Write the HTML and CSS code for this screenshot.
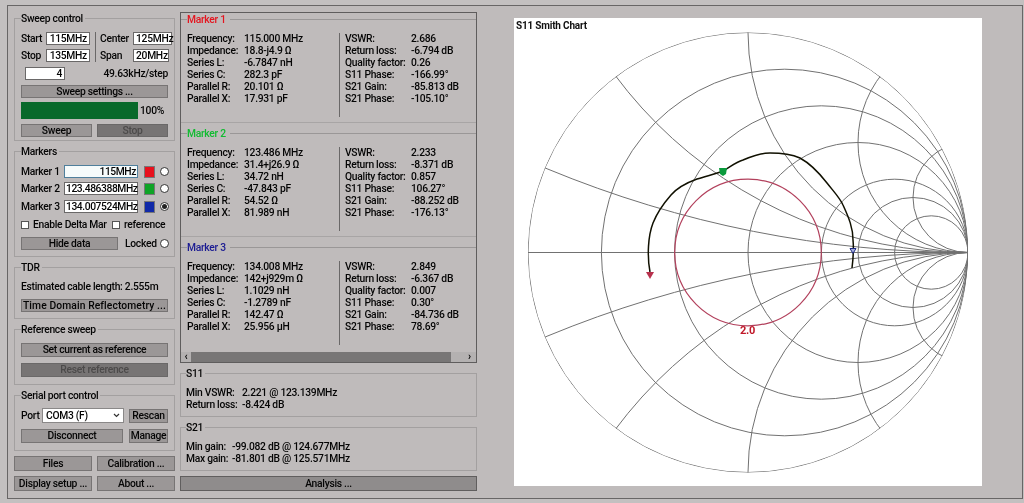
FILE: index.html
```html
<!DOCTYPE html>
<html lang="en">
<head>
<meta charset="utf-8">
<title>NanoVNA Saver</title>
<link rel="stylesheet" href="styles.css">
</head>
<body>
<div class="frame">
  <div class="left">
    <section class="group h123">
      <div class="gtitle">Sweep control</div>
      <div class="stack">
        <div class="row"><span class="l25">Start</span><span class="field w44">115MHz</span><i class="vsep"></i><span class="l33">Center</span><span class="field w39">125MHz</span></div>
        <div class="row"><span class="l25">Stop</span><span class="field w44">135MHz</span><i class="vsep short"></i><span class="l33">Span</span><span class="field w36">20MHz</span></div>
        <div class="row mt1"><span class="field w40 ml4">4</span><span class="push">49.63kHz/step</span></div>
        <div class="btn mt1">Sweep settings ...</div>
        <div class="row progress"><div class="bar"></div><span>100%</span></div>
        <div class="split mt1"><div class="btn">Sweep</div><div class="btn off">Stop</div></div>
      </div>
    </section>
    <section class="group h106">
      <div class="gtitle">Markers</div>
      <div class="stack">
        <div class="row"><span class="l43">Marker 1</span><span class="field w74 focus">115MHz</span><i class="swatch red"></i><i class="radio"></i></div>
        <div class="row"><span class="l43">Marker 2</span><span class="field w74">123.486388MHz</span><i class="swatch green"></i><i class="radio"></i></div>
        <div class="row mt1"><span class="l43">Marker 3</span><span class="field w74">134.007524MHz</span><i class="swatch blue"></i><i class="radio on"></i></div>
        <div class="row mt1"><i class="check"></i><span class="w79">Enable Delta Mar</span><i class="check"></i><span>reference</span></div>
        <div class="row mt2"><div class="btn w97">Hide data</div><span class="locked">Locked</span><i class="radio"></i></div>
      </div>
    </section>
    <section class="group h52">
      <div class="gtitle">TDR</div>
      <div class="stack gap6">
        <div class="line">Estimated cable length: 2.555m</div>
        <div class="btn wide">Time Domain Reflectometry ...</div>
      </div>
    </section>
    <section class="group h56">
      <div class="gtitle">Reference sweep</div>
      <div class="stack gap6">
        <div class="btn tall">Set current as reference</div>
        <div class="btn tall off">Reset reference</div>
      </div>
    </section>
    <section class="group h56">
      <div class="gtitle">Serial port control</div>
      <div class="stack gap6">
        <div class="row tall"><span class="l21">Port</span><span class="combo">COM3 (F)<svg class="chev" width="7" height="5" viewBox="0 0 7 5"><path d="M1 1l2.5 2.5L6 1" fill="none" stroke="#333" stroke-width="1.2"/></svg></span><div class="btn tall w39 ml5">Rescan</div></div>
        <div class="row tall"><div class="btn tall w102">Disconnect</div><div class="btn tall w39 ml6">Manage</div></div>
      </div>
    </section>
    <div class="actions">
      <div class="btn act">Files</div><div class="btn act">Calibration ...</div>
      <div class="btn act">Display setup ...</div><div class="btn act">About ...</div>
    </div>
  </div>

  <div class="mid">
    <div class="scrollbox">
      <div class="markers">
        <section class="mgroup">
          <div class="gtitle mred">Marker 1</div>
          <div class="mcols">
            <dl class="mleft">
              <dt>Frequency:</dt><dd>115.000 MHz</dd><dt>Impedance:</dt><dd>18.8-j4.9 Ω</dd><dt>Series L:</dt><dd>-6.7847 nH</dd><dt>Series C:</dt><dd>282.3 pF</dd><dt>Parallel R:</dt><dd>20.101 Ω</dd><dt>Parallel X:</dt><dd>17.931 pF</dd>
            </dl>
            <dl class="mright">
              <dt>VSWR:</dt><dd>2.686</dd><dt>Return loss:</dt><dd>-6.794 dB</dd><dt>Quality factor:</dt><dd>0.26</dd><dt>S11 Phase:</dt><dd>-166.99°</dd><dt>S21 Gain:</dt><dd>-85.813 dB</dd><dt>S21 Phase:</dt><dd>-105.10°</dd>
            </dl>
          </div>
        </section>
        <section class="mgroup">
          <div class="gtitle mgreen">Marker 2</div>
          <div class="mcols">
            <dl class="mleft">
              <dt>Frequency:</dt><dd>123.486 MHz</dd><dt>Impedance:</dt><dd>31.4+j26.9 Ω</dd><dt>Series L:</dt><dd>34.72 nH</dd><dt>Series C:</dt><dd>-47.843 pF</dd><dt>Parallel R:</dt><dd>54.52 Ω</dd><dt>Parallel X:</dt><dd>81.989 nH</dd>
            </dl>
            <dl class="mright">
              <dt>VSWR:</dt><dd>2.233</dd><dt>Return loss:</dt><dd>-8.371 dB</dd><dt>Quality factor:</dt><dd>0.857</dd><dt>S11 Phase:</dt><dd>106.27°</dd><dt>S21 Gain:</dt><dd>-88.252 dB</dd><dt>S21 Phase:</dt><dd>-176.13°</dd>
            </dl>
          </div>
        </section>
        <section class="mgroup last">
          <div class="gtitle mblue">Marker 3</div>
          <div class="mcols">
            <dl class="mleft">
              <dt>Frequency:</dt><dd>134.008 MHz</dd><dt>Impedance:</dt><dd>142+j929m Ω</dd><dt>Series L:</dt><dd>1.1029 nH</dd><dt>Series C:</dt><dd>-1.2789 nF</dd><dt>Parallel R:</dt><dd>142.47 Ω</dd><dt>Parallel X:</dt><dd>25.956 µH</dd>
            </dl>
            <dl class="mright">
              <dt>VSWR:</dt><dd>2.849</dd><dt>Return loss:</dt><dd>-6.367 dB</dd><dt>Quality factor:</dt><dd>0.007</dd><dt>S11 Phase:</dt><dd>0.30°</dd><dt>S21 Gain:</dt><dd>-84.736 dB</dd><dt>S21 Phase:</dt><dd>78.69°</dd>
            </dl>
          </div>
        </section>
      </div>
      <div class="hscroll"><span class="arrow">‹</span><div class="thumb"></div><span class="arrow right">›</span></div>
    </div>
    <section class="group sgroup">
      <div class="gtitle">S11</div>
      <dl class="summary s11"><dt>Min VSWR:</dt><dd>2.221 @ 123.139MHz</dd><dt>Return loss:</dt><dd>-8.424 dB</dd></dl>
    </section>
    <section class="group sgroup">
      <div class="gtitle">S21</div>
      <dl class="summary s21"><dt>Min gain:</dt><dd>-99.082 dB @ 124.677MHz</dd><dt>Max gain:</dt><dd>-81.801 dB @ 125.571MHz</dd></dl>
    </section>
    <div class="btn analysis">Analysis ...</div>
  </div>

  <div class="chart">
    <svg width="468" height="468" viewBox="0 0 468 468">
      <defs><clipPath id="unit"><circle cx="234" cy="234.5" r="220"/></clipPath></defs>
      <text class="ctitle" x="2" y="11">S11 Smith Chart</text>
      <g class="grid" clip-path="url(#unit)">
        <circle cx="234" cy="234.5" r="220"/>
        <circle cx="270.7" cy="234.5" r="183.3"/>
        <circle cx="307.3" cy="234.5" r="146.7"/>
        <circle cx="344" cy="234.5" r="110"/>
        <circle cx="380.7" cy="234.5" r="73.3"/>
        <circle cx="399" cy="234.5" r="55"/>
        <circle cx="417.3" cy="234.5" r="36.7"/>
        <path d="M14 234.5H454"/>
        <circle cx="454" cy="-865.5" r="1100"/>
        <circle cx="454" cy="1334.5" r="1100"/>
        <circle cx="454" cy="-205.5" r="440"/>
        <circle cx="454" cy="674.5" r="440"/>
        <circle cx="454" cy="14.5" r="220"/>
        <circle cx="454" cy="454.5" r="220"/>
        <circle cx="454" cy="124.5" r="110"/>
        <circle cx="454" cy="344.5" r="110"/>
        <circle cx="454" cy="179.5" r="55"/>
        <circle cx="454" cy="289.5" r="55"/>
      </g>
      <circle class="swr" cx="234" cy="234.5" r="73.3"/>
      <text class="swrlabel" x="226" y="316">2.0</text>
      <path class="trace" d="M136 254C133 238 134 218 139 205C143 195 150 185 157 177C163 170 172 165 183 161C192 158 202 156 209 153C216 149 222 144 229 142C238 138 248 135 256 135C266 135 277 136 286 140C297 146 306 156 313 165C320 174 326 180 329 187C335 200 339 210 339 222C340 232 339 242 338 250"/>
      <path class="mk1" d="M132 254h8l-4 7z"/>
      <path class="mk2" d="M205 150h8l-1 6l-3 2l-3-2z"/>
      <path class="mk3" d="M336 230.500h6l-3 5z"/>
    </svg>
  </div>
</div>
</body>
</html>
```
FILE: styles.css
```css
* { box-sizing: border-box; }
html, body { margin: 0; padding: 0; }
body {
  width: 1024px;
  height: 503px;
  overflow: hidden;
  background: #c3c0c0;
  color: #050505;
  font: 500 10.3px/12px Roboto, "Liberation Sans", Arial, sans-serif;
  letter-spacing: -0.28px;
}
.frame {
  display: flex;
  align-items: flex-start;
  width: 1016px;
  height: 494px;
  margin: 5px 1px 0 7px;
  padding: 6px 0 0 6px;
  border: 1px solid #686666;
  background: #bfbbbb;
  filter: blur(0.35px);
}
.left {
  display: flex;
  flex-direction: column;
  gap: 10px;
  width: 161px;
  padding-top: 6px;
}
.mid {
  display: flex;
  flex-direction: column;
  width: 297px;
  margin-left: 5px;
}
.group {
  border: 1px solid #a3a0a0;
  padding: 0 6px;
}
.h123 { height: 123px; }
.h106 { height: 106px; }
.h52 { height: 52px; }
.h56 { height: 56px; }
.gtitle {
  width: fit-content;
  height: 13px;
  margin: -7px 0 7px;
  padding: 0 2px 0 0;
  line-height: 14px;
  background: #bfbbbb;
}
.stack { display: flex; flex-direction: column; gap: 4px; }
.gap6 { gap: 6px; }
.row { display: flex; align-items: center; height: 13px; white-space: nowrap; }
.row.tall { height: 14px; }
.mt1 { margin-top: 1px; }
.mt2 { margin-top: 2px; }
.ml4 { margin-left: 4px; }
.ml5 { margin-left: 5px; }
.ml6 { margin-left: 6px; }
.l21 { width: 21px; flex: none; }
.l25 { width: 25px; flex: none; }
.l33 { width: 33px; flex: none; }
.l43 { width: 43px; flex: none; }
.w79 { width: 79px; flex: none; }
.push { margin-left: auto; }
.field {
  flex: none;
  height: 13px;
  padding: 0 2px;
  border: 1px solid #6a6868;
  background: #fff;
  line-height: 11px;
  text-align: right;
  white-space: nowrap;
}
.w36 { width: 36px; }
.w39 { width: 39px; }
.w40 { width: 40px; }
.w44 { width: 44px; }
.w74 { width: 74px; padding: 0 1px; letter-spacing: -0.42px; }
.w97 { width: 97px; }
.w102 { width: 102px; }
.focus { border-color: #4f7f9c; background: #f6fbfb; }
.vsep {
  flex: none;
  align-self: flex-start;
  width: 1px;
  height: 17px;
  margin: 0 4px 0 5px;
  background: #6a6868;
}
.vsep.short { height: 13px; }
.btn {
  flex: none;
  height: 13px;
  border: 1px solid #777474;
  background: #9b9797;
  line-height: 11px;
  text-align: center;
  white-space: nowrap;
}
.btn.wide { letter-spacing: 0.1px; }
.btn.tall { height: 14px; line-height: 12px; }
.btn.off { background: #777474; color: #4c4a4a; border-color: #6a6868; }
.split { display: flex; justify-content: space-between; }
.split .btn { width: 71px; }
.progress { height: 17px; gap: 2px; }
.bar { width: 117px; height: 17px; background: #08692b; }
.swatch {
  flex: none;
  width: 11px;
  height: 12px;
  margin-left: 6px;
  border: 1px solid #777;
}
.red { background: #e8101c; }
.green { background: #0fa426; }
.blue { background: #1029a8; }
.radio {
  flex: none;
  position: relative;
  width: 9px;
  height: 9px;
  margin-left: 5px;
  border: 1px solid #333;
  border-radius: 50%;
  background: #fff;
}
.radio.on::after {
  content: "";
  position: absolute;
  inset: 1px;
  border-radius: 50%;
  background: #222;
}
.check {
  flex: none;
  width: 8px;
  height: 8px;
  margin-right: 4px;
  border: 1px solid #555;
  background: #fff;
}
.locked { margin-left: 7px; width: 30px; }
.line { height: 12px; white-space: nowrap; }
.combo {
  display: flex;
  align-items: center;
  justify-content: space-between;
  flex: none;
  width: 82px;
  height: 15px;
  margin-top: -1px;
  padding: 0 3px;
  border: 1px solid #8a8888;
  background: #fff;
}
.chev { flex: none; }
.actions {
  display: grid;
  grid-template-columns: 78px 78px;
  gap: 5px;
  margin-top: -5px;
}
.btn.act { height: 15px; line-height: 13px; }
.scrollbox {
  height: 351px;
  border: 1px solid #5f5d5d;
}
.markers {
  height: 339px;
  padding-top: 6px;
  overflow: hidden;
}
.mgroup {
  height: 104px;
  margin-bottom: 10px;
  padding: 0 0 0 6px;
  border-top: 1px solid #9a9797;
  border-bottom: 1px solid #a8a5a5;
}
.mgroup.last { height: 100px; margin: 0; border-bottom: 0; }
.mgroup .gtitle { padding: 0 4px 0 0; }
.mred { color: #e5141e; }
.mgreen { color: #10bb30; }
.mblue { color: #1a1a92; }
.mcols { display: flex; }
dl { margin: 0; display: grid; }
dd { margin: 0; white-space: nowrap; }
dt { white-space: nowrap; }
.mleft {
  grid-template-columns: 57px 96px;
  grid-auto-rows: 12px;
  width: 153px;
  height: 84px;
  align-content: start;
  border-right: 1px solid #6a6868;
}
.mright {
  grid-template-columns: 66px auto;
  grid-auto-rows: 12px;
  align-content: start;
  margin-left: 5px;
}
.hscroll {
  display: flex;
  height: 10px;
  background: #b4b1b1;
}
.arrow {
  flex: none;
  width: 10px;
  font-weight: bold;
  line-height: 9px;
  text-align: center;
}
.arrow.right { width: 25px; padding-left: 12px; }
.thumb { flex: 1; background: #787676; }
.sgroup {
  height: 44px;
  margin-top: 10px;
  padding: 0 5px;
}
.summary { grid-auto-rows: 12px; }
.s11 { grid-template-columns: 56px auto; }
.s21 { grid-template-columns: 46px auto; }
.btn.analysis {
  height: 15px;
  margin-top: 5px;
  line-height: 13px;
  background: #8f8c8c;
  border-color: #605e5e;
}
.chart {
  flex: none;
  width: 468px;
  height: 468px;
  margin: 6px 0 0 37px;
  background: #fff;
}
.chart svg { display: block; }
.ctitle { font: bold 10px Roboto, "Liberation Sans", Arial, sans-serif; fill: #111; letter-spacing: -0.2px; }
.grid circle, .grid path { fill: none; stroke: #717171; stroke-width: 1; }
.swr { fill: none; stroke: #b2405c; stroke-width: 1.2; }
.swrlabel { font: bold 11px Roboto, "Liberation Sans", Arial, sans-serif; fill: #c01828; }
.trace { fill: none; stroke: #101000; stroke-width: 1.5; }
.mk1 { fill: #b8304c; }
.mk2 { fill: #0a9a3c; }
.mk3 { fill: #a8b0e0; stroke: #1c2a80; stroke-width: 1; }
```
